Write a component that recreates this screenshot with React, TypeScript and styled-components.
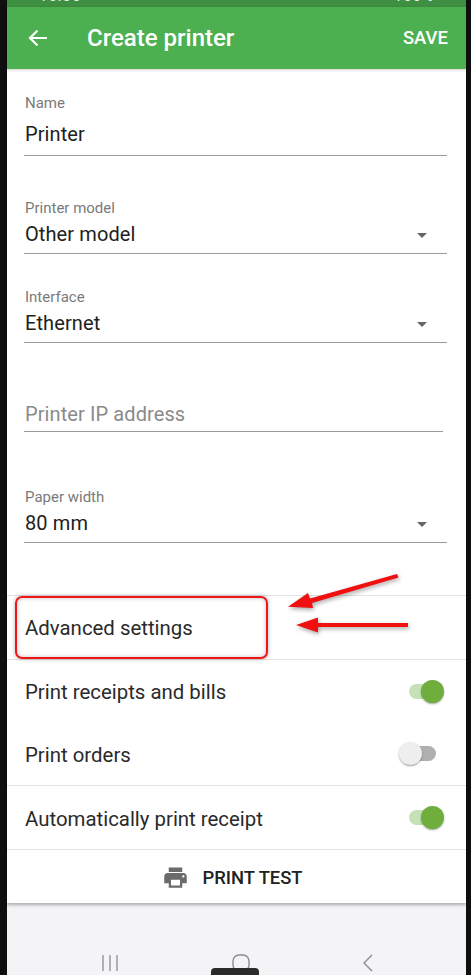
import React from "react";
import styled, { createGlobalStyle } from "styled-components";

const Global = createGlobalStyle`
  html, body { margin: 0; padding: 0; background: #0f0f0f; }
  * { box-sizing: border-box; }
`;

const Page = styled.div`
  width: 471px;
  height: 975px;
  overflow: hidden;
  position: relative;
  padding: 0 5px 0 7px;
  font-family: Roboto, "Liberation Sans", sans-serif;
  color: #212121;
`;

const Phone = styled.div`
  height: 100%;
  background: #f4f4f6;
  display: flex;
  flex-direction: column;
`;

const StatusBar = styled.div`
  height: 7px;
  background: #3e8f41;
  flex: none;
  overflow: hidden;
  display: flex;
  justify-content: space-between;
  padding: 0 32px;
  color: #e8f2e8;
  font-size: 15px;
  line-height: 15px;
`;

const StatusText = styled.span`
  margin-top: -11px;
  letter-spacing: 1px;
`;

const AppBar = styled.header`
  height: 62px;
  flex: none;
  background: #4caf50;
  display: flex;
  align-items: center;
  padding: 0 18px 0 21px;
  color: #fff;
  box-shadow: 0 1px 3px rgba(0, 0, 0, 0.2);
  position: relative;
`;

const Title = styled.div`
  font-size: 24px;
  font-weight: 500;
  margin-left: 39px;
  flex: 1;
`;

const Save = styled.div`
  font-size: 18.5px;
  font-weight: 500;
`;

const Sheet = styled.main`
  background: #fff;
  height: 834px;
  flex: none;
  display: flex;
  flex-direction: column;
  box-shadow: 0 2px 3px rgba(0, 0, 0, 0.3);
`;

const Form = styled.div`
  height: 526px;
  flex: none;
  padding: 25px 19px 0 17px;
`;

const Field = styled.div<{ $height: number; $inset?: number }>`
  height: ${(p) => p.$height}px;
  margin-right: ${(p) => p.$inset ?? 0}px;
`;

const Label = styled.div<{ $spacer?: number }>`
  font-size: 15px;
  height: ${(p) => p.$spacer ?? 18}px;
  line-height: 18px;
  color: #7a7a7a;
  padding-left: 1px;
`;

const Control = styled.div<{ $muted?: boolean; $height: number; $pad: number }>`
  height: ${(p) => p.$height}px;
  display: flex;
  align-items: center;
  justify-content: space-between;
  font-size: 20px;
  color: ${(p) => (p.$muted ? "#8a8a8a" : "#212121")};
  border-bottom: 1.5px solid #9a9a9a;
  padding: 0 0 ${(p) => p.$pad}px 1px;
  letter-spacing: 0.1px;
`;

const Caret = styled.span`
  width: 0;
  height: 0;
  margin-right: 20px;
  margin-top: 3px;
  border-left: 5.5px solid transparent;
  border-right: 5.5px solid transparent;
  border-top: 5px solid #666;
`;

const Row = styled.div<{ $height: number; $plain?: boolean }>`
  height: ${(p) => p.$height}px;
  flex: none;
  border-top: ${(p) => (p.$plain ? "none" : "1px solid #e2e2e2")};
  display: flex;
  align-items: center;
  justify-content: space-between;
  padding: 0 17px 0 18px;
  font-size: 20.4px;
  color: #2a2a2a;
`;

const RowText = styled.span`
  margin-top: 2px;
`;

const Switch = styled.div<{ $on?: boolean }>`
  width: 27px;
  height: 15px;
  border-radius: 8px;
  position: relative;
  margin-right: 13px;
  background: ${(p) => (p.$on ? "#c5e1b5" : "#b0b0b0")};

  &::after {
    content: "";
    position: absolute;
    top: -4px;
    width: 23px;
    height: 23px;
    border-radius: 50%;
    left: ${(p) => (p.$on ? "12px" : "-10px")};
    background: ${(p) => (p.$on ? "#6fae3c" : "#eeeeee")};
    box-shadow: 0 1px 2px rgba(0, 0, 0, 0.35);
  }
`;

const PrintButton = styled.div`
  flex: 1;
  border-top: 1px solid #e2e2e2;
  display: flex;
  align-items: center;
  justify-content: center;
  gap: 13px;
  padding: 2px 8px 0 0;
  font-size: 18.4px;
  font-weight: 500;
  color: #212121;
`;

const NavBar = styled.nav`
  flex: 1;
  display: flex;
  justify-content: space-between;
  align-items: flex-start;
  padding: 51px 92px 0 94px;
`;

const Highlight = styled.div`
  position: absolute;
  left: 15px;
  top: 596px;
  width: 253px;
  height: 63px;
  border: 2px solid #f01616;
  border-radius: 7px;
  box-shadow: 0 0 4px rgba(0, 0, 0, 0.3), inset 0 0 4px rgba(0, 0, 0, 0.25);
`;

const Arrows = styled.svg`
  position: absolute;
  left: 280px;
  top: 565px;
  filter: drop-shadow(1px 2px 2px rgba(0, 0, 0, 0.35));
`;

const Tab = styled.div`
  position: absolute;
  left: 211px;
  top: 968px;
  width: 48px;
  height: 7px;
  background: #2b2b2b;
  border-radius: 4px 4px 0 0;
`;

const fields = [
  { label: "Name", value: "Printer", height: 105, control: 44, pad: 0 },
  { label: "Printer model", value: "Other model", height: 89, control: 37, pad: 3, select: true },
  { label: "Interface", value: "Ethernet", height: 89, control: 37, pad: 3, select: true },
];

const rows = [
  { text: "Print receipts and bills", on: true, height: 63 },
  { text: "Print orders", on: false, height: 63, plain: true },
  { text: "Automatically print receipt", on: true, height: 64 },
];

export default function App() {
  return (
    <Page>
      <Global />
      <Phone>
        <StatusBar>
          <StatusText>10:36</StatusText>
          <StatusText>100%</StatusText>
        </StatusBar>
        <AppBar>
          <svg width="20" height="20" viewBox="0 0 20 20" fill="none" stroke="#fff" strokeWidth="2.2">
            <path d="M19 10H2M9.5 2.5L2 10l7.5 7.5" />
          </svg>
          <Title>Create printer</Title>
          <Save>SAVE</Save>
        </AppBar>
        <Sheet>
          <Form>
            {fields.map((f) => (
              <Field key={f.label} $height={f.height}>
                <Label>{f.label}</Label>
                <Control $height={f.control} $pad={f.pad}>
                  {f.value}
                  {f.select && <Caret />}
                </Control>
              </Field>
            ))}
            <Field $height={111} $inset={4}>
              <Label $spacer={20} />
              <Control $muted $height={35} $pad={0}>
                Printer IP address
              </Control>
            </Field>
            <Field $height={60}>
              <Label>Paper width</Label>
              <Control $height={37} $pad={3}>
                80 mm
                <Caret />
              </Control>
            </Field>
          </Form>
          <Row $height={64}>Advanced settings</Row>
          {rows.map((r) => (
            <Row key={r.text} $height={r.height} $plain={r.plain}>
              <RowText>{r.text}</RowText>
              <Switch $on={r.on} />
            </Row>
          ))}
          <PrintButton>
            <svg width="27" height="27" viewBox="0 0 24 24" fill="#6b6b6b">
              <path d="M19 8H5c-1.66 0-3 1.34-3 3v6h4v4h12v-4h4v-6c0-1.66-1.34-3-3-3zm-3 11H8v-5h8v5zm3-7c-.55 0-1-.45-1-1s.45-1 1-1 1 .45 1 1-.45 1-1 1zm-1-9H6v4h12V3z" />
            </svg>
            PRINT TEST
          </PrintButton>
        </Sheet>
        <NavBar>
          <svg width="18" height="18" viewBox="0 0 18 18" stroke="#8c8c8c" strokeWidth="1.3" fill="none">
            <path d="M2 1v16M9 1v16M16 1v16" />
          </svg>
          <svg width="18" height="18" viewBox="0 0 18 18" stroke="#8c8c8c" strokeWidth="1.4" fill="none">
            <rect x="1" y="1" width="16" height="16" rx="6" />
          </svg>
          <svg width="12" height="18" viewBox="0 0 12 18" stroke="#8c8c8c" strokeWidth="1.4" fill="none">
            <path d="M10 1L2 9l8 8" />
          </svg>
        </NavBar>
      </Phone>
      <Highlight />
      <Arrows width="135" height="70" viewBox="0 0 135 70" fill="#f01010">
        <path d="M117 9L118.5 12.5L32 38L33 43L8 41.7L28 28L30 33.5Z" />
        <path d="M128 58v4H38v5.5L16 60l22-7.5V58Z" />
      </Arrows>
      <Tab />
    </Page>
  );
}
